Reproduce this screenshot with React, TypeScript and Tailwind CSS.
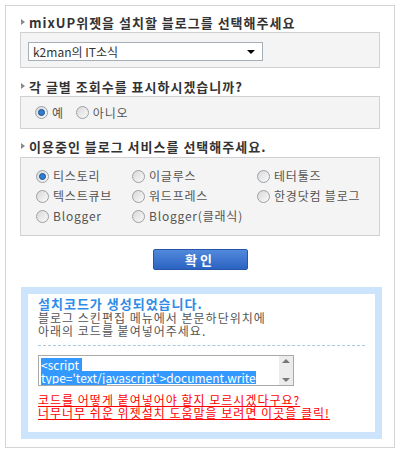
import React from 'react';

const font = { fontFamily: '"Noto Sans CJK KR", "Noto Sans", sans-serif' };

const Heading = ({ text }: { text: string }) => (
  <div className="flex h-[18px] items-center text-[13px] font-bold leading-none text-[#333] tracking-[1px]">
    <span className="mr-[4px] ml-[1px] inline-block h-0 w-0 border-y-[3.5px] border-l-[4px] border-y-transparent border-l-[#8a8a8a]"></span>
    {text}
  </div>
);

const Radio = ({ label, checked = false }: { label: string; checked?: boolean }) => (
  <label className="flex items-center gap-[4px] text-[12px] leading-none text-[#555] tracking-[0.8px]">
    <span className="flex h-[13px] w-[13px] shrink-0 items-center justify-center rounded-full border border-[#9aa0a6] bg-gradient-to-br from-[#d8d8d8] to-[#fbfbfb]">
      {checked && <span className="h-[7px] w-[7px] rounded-full border border-[#1b4f8f] bg-[#2d7fd2]"></span>}
    </span>
    {label}
  </label>
);

const App: React.FC = () => {
  return (
    <div style={font} className="bg-white">
      <div className="ml-[5px] mt-[5px] h-[443px] w-[390px] border border-[#d3d3d8] px-[14px] pt-[7px]">
        <Heading text="mixUP위젯을 설치할 블로그를 선택해주세요" />
        <div className="mt-[1px] h-[36px] border border-[#cfd1d4] bg-[#f4f4f4] pl-[7px] pt-[9px]">
          <div className="flex h-[19px] w-[235px] items-center justify-between border border-[#a8aeb6] bg-white pl-[4px] pr-[7px] text-[12px] leading-none text-[#333]">
            <span>k2man의 IT소식</span>
            <span className="inline-block h-0 w-0 border-x-[4px] border-t-[4px] border-x-transparent border-t-black"></span>
          </div>
        </div>

        <div className="mt-[9px]">
          <Heading text="각 글별 조회수를 표시하시겠습니까?" />
        </div>
        <div className="mt-[1px] flex h-[33px] items-center gap-[12px] border border-[#cfd1d4] bg-[#f4f4f4] pl-[14px]">
          <Radio label="예" checked />
          <Radio label="아니오" />
        </div>

        <div className="mt-[8px]">
          <Heading text="이용중인 블로그 서비스를 선택해주세요." />
        </div>
        <div className="mt-[2px] grid h-[79px] grid-cols-[96px_125px_1fr] grid-rows-[20px_20px_20px] content-start border border-[#cfd1d4] bg-[#f4f4f4] pl-[15px] pt-[8px]">
          <Radio label="티스토리" checked />
          <Radio label="이글루스" />
          <Radio label="테터툴즈" />
          <Radio label="텍스트큐브" />
          <Radio label="워드프레스" />
          <Radio label="한경닷컴 블로그" />
          <Radio label="Blogger" />
          <Radio label="Blogger(클래식)" />
        </div>

        <div className="mt-[13px] flex justify-center">
          <button className="flex h-[21px] w-[95px] items-center justify-center rounded-[2px] border border-[#2556a8] bg-gradient-to-b from-[#5189dc] to-[#2b63c2] text-[13px] font-bold leading-none text-white tracking-[3px]">
            확인
          </button>
        </div>

        <div className="ml-[1px] mt-[17px] h-[152px] w-[361px] border-[7px] border-[#cce5fd] bg-white pl-[10px] pr-[6px] pt-[2px] tracking-[1px]">
          <div className="text-[13px] font-bold leading-[15px] text-[#2e8ce6]">설치코드가 생성되었습니다.</div>
          <div className="text-[12px] leading-[13px] text-[#555]">블로그 스킨편집 메뉴에서 본문하단위치에</div>
          <div className="text-[12px] leading-[13px] text-[#555]">아래의 코드를 붙여넣어주세요.</div>
          <div className="mt-[8px] mr-[4px] border-t border-dashed border-[#a3cbe9]"></div>
          <div className="mt-[9px] flex h-[31px] w-[256px] border border-[#a9a9a9] bg-white tracking-normal">
            <div className="flex-1 overflow-hidden pl-[2px] pt-[2px] text-[12px] leading-[13px] text-white">
              <div className="h-[13px]"><span className="inline-block h-[13px] bg-[#3399ff] pr-[3px] leading-[13px]">&lt;script</span></div>
              <div className="h-[13px] whitespace-nowrap"><span className="inline-block h-[13px] bg-[#3399ff] leading-[13px]">type='text/javascript'&gt;document.write</span></div>
              <div className="h-[13px] whitespace-nowrap"><span className="inline-block h-[13px] bg-[#3399ff] leading-[13px]">('&lt;scr'+'ipt')</span></div>
            </div>
            <div className="flex w-[14px] flex-col justify-between bg-[#ececec] py-[3px]">
              <span className="mx-auto inline-block h-0 w-0 border-x-[4px] border-b-[4px] border-x-transparent border-b-[#777]"></span>
              <span className="mx-auto inline-block h-0 w-0 border-x-[4px] border-t-[4px] border-x-transparent border-t-[#777]"></span>
            </div>
          </div>
          <div className="mt-[7px] text-[12px] leading-[13px] text-[#f00] whitespace-nowrap">
            <a className="underline">코드를 어떻게 붙여넣어야 할지 모르시겠다구요?</a>
            <br />
            <a className="underline">너무너무 쉬운 위젯설치 도움말을 보려면 이곳을 클릭!</a>
          </div>
        </div>
      </div>
    </div>
  );
};

export default App;
